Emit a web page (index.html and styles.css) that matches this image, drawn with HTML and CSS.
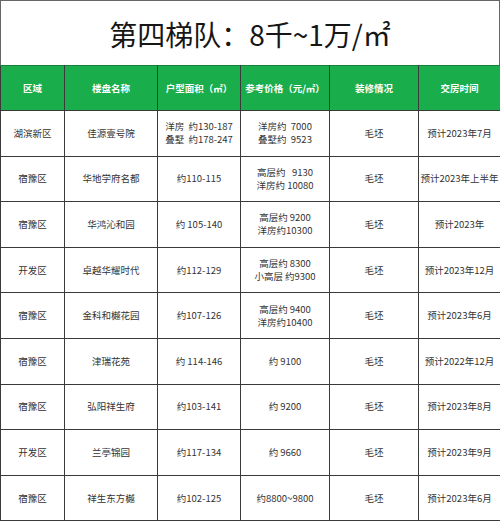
FILE: index.html
```html
<!DOCTYPE html>
<html lang="zh-CN">
<head>
<meta charset="utf-8">
<title>第四梯队</title>
<link rel="stylesheet" href="styles.css">
</head>
<body>
<div class="sheet">
  <div class="title">第四梯队：8千~1万/㎡</div>
  <table class="grid">
    <colgroup>
      <col class="c1"><col class="c2"><col class="c3"><col class="c4"><col class="c5"><col class="c6">
    </colgroup>
    <thead>
      <tr>
        <th>区域</th><th>楼盘名称</th><th>户型面积（㎡）</th><th>参考价格（元/㎡）</th><th>装修情况</th><th>交房时间</th>
      </tr>
    </thead>
    <tbody>
      <tr>
        <td>湖滨新区</td><td>佳源壹号院</td><td class="pre">洋房  约130-187
叠墅  约178-247</td><td class="pre">洋房约  7000
叠墅约  9523</td><td>毛坯</td><td>预计2023年7月</td>
      </tr>
      <tr>
        <td>宿豫区</td><td>华地学府名都</td><td>约110-115</td><td class="pre">高层约   9130
洋房约 10080</td><td>毛坯</td><td>预计2023年上半年</td>
      </tr>
      <tr>
        <td>宿豫区</td><td>华鸿沁和园</td><td>约 105-140</td><td class="pre">高层约 9200
洋房约10300</td><td>毛坯</td><td>预计2023年</td>
      </tr>
      <tr>
        <td>开发区</td><td>卓越华耀时代</td><td>约112-129</td><td class="pre">高层约 8300
小高层 约9300</td><td>毛坯</td><td>预计2023年12月</td>
      </tr>
      <tr>
        <td>宿豫区</td><td>金科和樾花园</td><td>约107-126</td><td class="pre">高层约 9400
洋房约10400</td><td>毛坯</td><td>预计2023年6月</td>
      </tr>
      <tr>
        <td>宿豫区</td><td>津瑞花苑</td><td>约 114-146</td><td>约 9100</td><td>毛坯</td><td>预计2022年12月</td>
      </tr>
      <tr>
        <td>宿豫区</td><td>弘阳祥生府</td><td>约103-141</td><td>约 9200</td><td>毛坯</td><td>预计2023年8月</td>
      </tr>
      <tr>
        <td>开发区</td><td>兰亭锦园</td><td>约117-134</td><td>约 9660</td><td>毛坯</td><td>预计2023年9月</td>
      </tr>
      <tr>
        <td>宿豫区</td><td>祥生东方樾</td><td>约102-125</td><td>约8800~9800</td><td>毛坯</td><td>预计2023年6月</td>
      </tr>
    </tbody>
  </table>
</div>
</body>
</html>
```
FILE: styles.css
```css
html, body {
  margin: 0;
  padding: 0;
  background: #ffffff;
}
body {
  font-family: "Noto Sans CJK SC", "Noto Sans", sans-serif;
  color: #333333;
}
.sheet {
  width: 500px;
}
.title {
  height: 64px;
  border: 1px solid #666666;
  border-bottom: none;
  box-sizing: border-box;
  height: 65px;
  display: flex;
  align-items: center;
  justify-content: center;
  font-size: 28px;
  color: #161616;
  letter-spacing: 0;
  padding-top: 1px;
}
.grid {
  width: 500px;
  border-collapse: collapse;
  table-layout: fixed;
}
.c1 { width: 64px; }
.c2 { width: 93px; }
.c3 { width: 83px; }
.c4 { width: 89px; }
.c5 { width: 89px; }
.c6 { width: 82px; }
.grid th,
.grid td {
  border: 1px solid #3a3a3a;
  text-align: center;
  vertical-align: middle;
  padding: 0;
  font-size: 9.5px;
  line-height: 13px;
}
.grid th {
  background: #1aad4b;
  color: #ffffff;
  font-weight: 700;
  height: 44px;
  border-top-color: #17823a;
}
.grid td {
  height: 44.6px;
  color: #333333;
}
.grid td.pre {
  white-space: pre;
}
```
